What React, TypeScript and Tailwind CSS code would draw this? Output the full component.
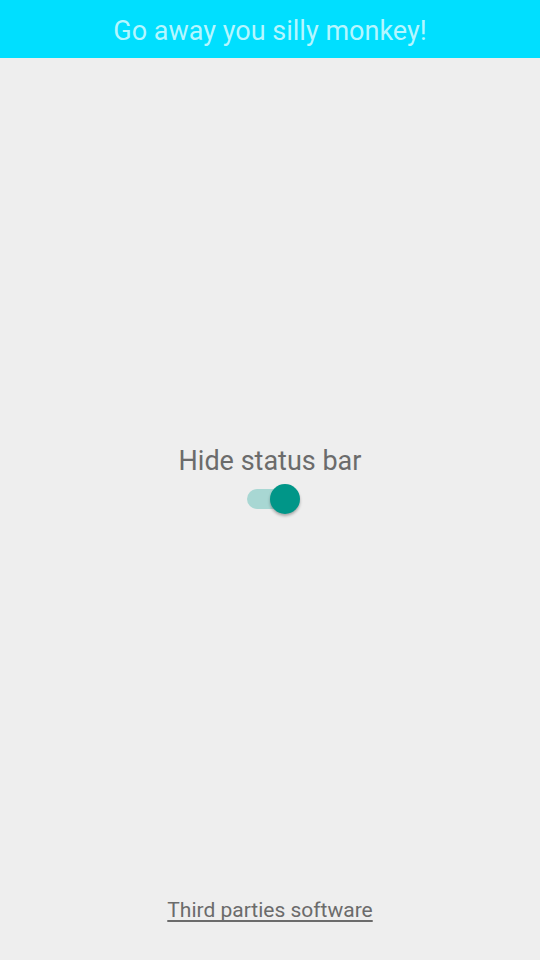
export default function App() {
    return (
        <div className="h-screen w-full flex flex-col bg-[#eeeeee]" style={{ fontFamily: "Roboto, 'Liberation Sans', sans-serif" }}>
            <div className="h-[58px] bg-[#00dfff] flex items-center justify-center">
                <h1 className="text-[27px] leading-[32px] mt-[3px] text-[#b5f6ff]">Go away you silly monkey!</h1>
            </div>

            <div className="flex-1 flex flex-col items-center justify-center">
                <p className="text-[27px] leading-[30px] mt-[3px] text-[#6b6b6b]">Hide status bar</p>
                <div className="relative mt-[8px] ml-[6px] w-[54px] h-[30px] flex items-center">
                    <div className="ml-[1px] w-[50px] h-[20px] rounded-full bg-[#a8d7d3]" />
                    <div className="absolute right-0 top-0 w-[30px] h-[30px] rounded-full bg-[#009688] shadow-[0_2px_3px_rgba(0,0,0,0.3)]" />
                </div>
            </div>

            <div className="flex justify-center pb-[38px]">
                <a className="text-[21px] leading-[24px] text-[#6b6b6b] underline underline-offset-[3px] [text-decoration-skip-ink:none]">Third parties software</a>
            </div>
        </div>
    );
}
